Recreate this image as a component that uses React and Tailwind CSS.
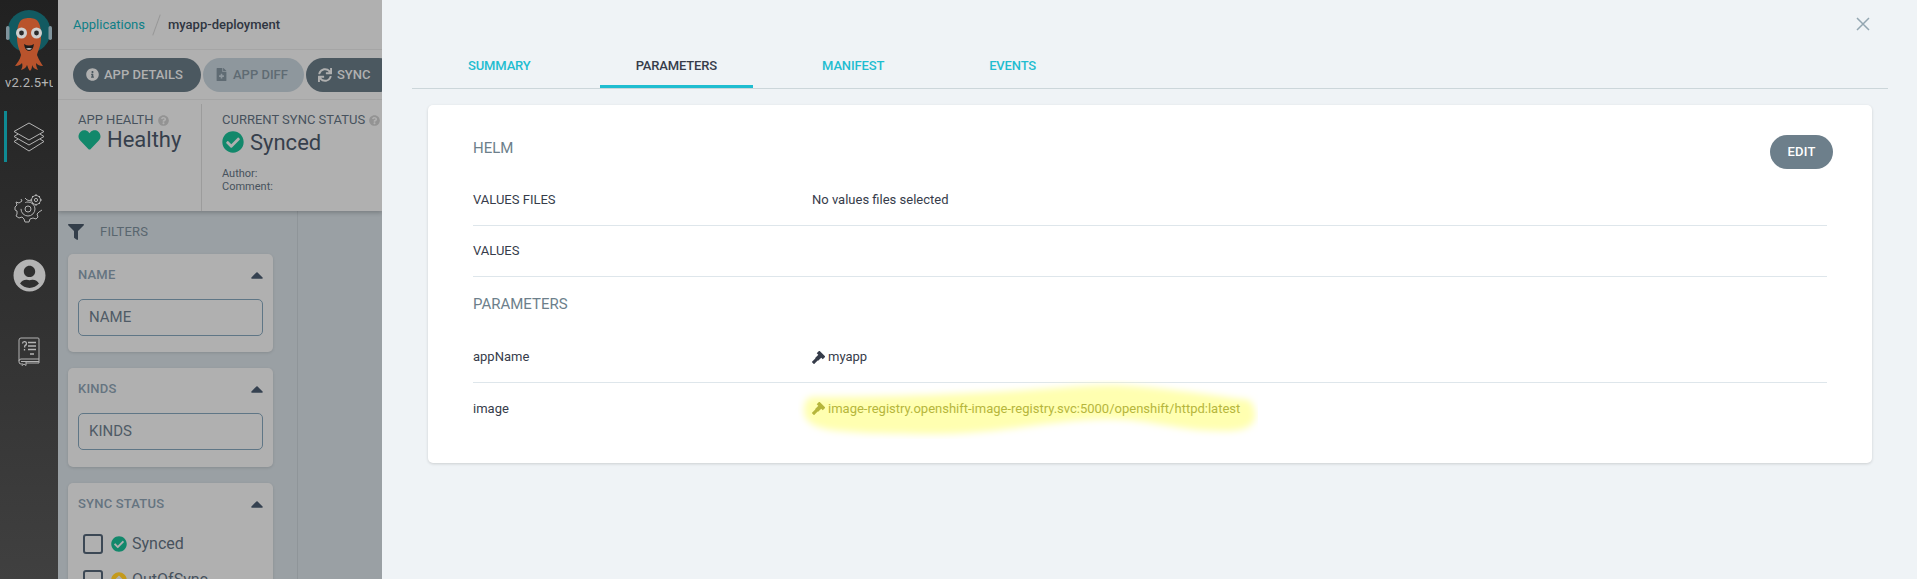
import { FaInfoCircle, FaFileMedical, FaSync, FaHeart, FaCheckCircle, FaQuestionCircle, FaFilter, FaCaretUp, FaUserCircle, FaArrowAltCircleUp } from 'react-icons/fa';

const StackIcon = () => (
    <svg viewBox="0 0 32 30" className="h-[30px] w-[32px]" fill="none" stroke="#b4b4b4" strokeWidth="1" strokeLinejoin="round">
        <path d="M16 1 L31 9.5 L16 18 L1 9.5 Z" />
        <path d="M5 12 L1 14.5 L16 23 L31 14.5 L27 12" />
        <path d="M5 17 L1 19.5 L16 29 L31 19.5 L27 17" />
    </svg>
);

const GearsIcon = () => (
    <svg viewBox="0 0 30 30" className="h-[30px] w-[30px]" fill="none" stroke="#b4b4b4" strokeWidth="1" strokeLinejoin="round">
        <path d="M11 5 L13 7 L17 8 M7 6 L8 8 L5 10 L2 9 L3 12 L1 14 L1 17 L3 18 L3 21 L2 23 L5 25 L8 24 L10 26 L11 29 L15 29 L16 26 L19 25 L22 26 L24 24 L23 21 L25 19 L28 17" />
        <circle cx="14" cy="16" r="7" strokeDasharray="22 8" />
        <circle cx="14" cy="16" r="3" />
        <circle cx="22" cy="7" r="4.5" />
        <circle cx="22" cy="7" r="1.6" />
        <path d="M22 1 V2.5 M22 11.5 V13 M16 7 H17.5 M26.5 7 H28 M18 3 L19 4 M25 10 L26 11 M26 3 L25 4 M19 10 L18 11" />
    </svg>
);

const DocsIcon = () => (
    <svg viewBox="0 0 22 29" className="h-[29px] w-[22px]" fill="none" stroke="#b4b4b4" strokeWidth="1" strokeLinejoin="round">
        <path d="M3 1 H20 A1 1 0 0 1 21 2 V26 H8 M3 1 A2 2 0 0 0 1 3 V25 A2 2 0 0 0 3 27 H3" />
        <path d="M1 24 A2 2 0 0 1 3 22 H21 M3 24.5 H21" />
        <path d="M4 26 V28.5 L6 27 L8 28.5 V24" />
        <path d="M10 5.5 H18 M10 9 H18 M10 12.5 H18 M12 17 H16" strokeWidth="1.5" />
        <path d="M4.5 6.5 A2 2 0 1 1 7 8.5 L6.5 10.5 M6.5 12 V13.5" strokeWidth="1.3" />
    </svg>
);

const ArgoLogo = () => (
    <svg viewBox="0 0 46 62" className="h-[62px] w-[46px]">
        <circle cx="23" cy="22.5" r="21.5" fill="#125a61" />
        <rect x="0" y="17" width="3.5" height="14" rx="1.7" fill="#7f939c" />
        <rect x="42.5" y="17" width="3.5" height="14" rx="1.7" fill="#7f939c" />
        <path d="M11 28 C11 12 15 9 23 9 C31 9 35 12 35 28 C35 38 32 41 31 46 C33 51 35 54 37 57 C33 57 31 55 30 54 C30 57 31 59 32 61 C28 60 27 58 26 56 C26 58 26 60 24 62 C22 60 22 58 21 56 C20 59 18 60 15 61 C16 59 17 57 16 54 C15 55 13 57 9 57 C11 54 14 51 15 46 C14 41 11 38 11 28 Z" fill="#b9532c" />
        <circle cx="15.5" cy="24" r="5.5" fill="#cfcfcf" />
        <circle cx="30.5" cy="24" r="5.5" fill="#cfcfcf" />
        <circle cx="15.5" cy="24" r="2.4" fill="#2a2a2a" />
        <circle cx="30.5" cy="24" r="2.4" fill="#2a2a2a" />
        <path d="M18 35 Q23 38 28 35 Q27 42 23 42 Q19 42 18 35 Z" fill="#1d1d1d" />
        <path d="M20 39.5 Q23 38.5 26 39.5 Q23 42 20 39.5 Z" fill="#cfcfcf" />
    </svg>
);

const PinIcon = () => (
    <svg viewBox="0 0 14 14" className="relative mr-[3px] h-[13px] w-[13px]" fill="none" stroke="currentColor">
        <path d="M6.5 1 L13 7.5" strokeWidth="4" />
        <path d="M9.5 4.5 L5 9" strokeWidth="4.5" />
        <path d="M6 8 L1 13" strokeWidth="3.4" />
    </svg>
);

const FilterCard = ({ title, children, className }) => (
    <div className={`mx-[10px] w-[205px] shrink-0 rounded-[5px] bg-[#b0b0b0] px-[10px] pt-[11px] shadow-[0_1px_3px_rgba(0,0,0,0.12)] ${className}`}>
        <div className="flex h-[20px] items-center justify-between">
            <span className="text-[13px] font-medium tracking-[0.2px] text-[#657480]">{title}</span>
            <FaCaretUp className="-mr-[4px] h-[20px] w-[20px] text-[#354150]" />
        </div>
        {children}
    </div>
);

const FilterInput = ({ label }) => (
    <div className="mt-[14px] flex h-[37px] items-center rounded-[5px] border border-[#5f7686] pl-[10px] text-[15px] text-[#4f5b66]">
        {label}
    </div>
);

const SyncOption = ({ icon, label }) => (
    <div className="flex h-[36px] items-center pl-[5px] text-[16px] text-[#47525d]">
        <span className="h-[20px] w-[20px] rounded-[3px] border-2 border-[#3c4855]" />
        {icon}
        <span className="ml-[5px]">{label}</span>
    </div>
);

const ParamRow = ({ name, value, border, pin, highlight }) => (
    <div className={`flex h-[51px] items-center text-[13px] text-[#363c4a] ${border ? 'border-b border-[#dee6eb]' : ''}`}>
        <div className="w-[339px] shrink-0">{name}</div>
        <div className={`relative flex items-center ${highlight ? 'text-[#b6b63c]' : ''}`}>
            {highlight && (
                <svg viewBox="0 0 460 60" className="absolute left-[-14px] top-[-20px] h-[60px] w-[460px]">
                    <defs>
                        <filter id="marker"><feGaussianBlur stdDeviation="3.5" /></filter>
                    </defs>
                    <path d="M6 32 C6 22 10 18 14 18 C70 18 140 16 196 13 C240 11 280 6 311 6 C350 6 410 16 451 21 C458 28 458 38 456 42 C452 50 440 52 426 52 C380 52 350 40 311 40 C260 40 200 55 139 55 C90 55 40 54 24 49 C12 46 6 40 6 32 Z" fill="#ffffb0" filter="url(#marker)" />
                </svg>
            )}
            {pin && <PinIcon />}
            <span className="relative">{value}</span>
        </div>
    </div>
);

const Tab = ({ label, active }) => (
    <div className={`h-[32px] px-[36px] pt-[1px] text-[13px] leading-[18px] font-medium tracking-[-0.15px] ${active ? 'border-b-[3px] border-[#1fbdd0] text-[#363c4a]' : 'text-[#1fbdd0]'}`}>
        {label}
    </div>
);

export default function App() {
    return (
        <div className="flex h-[579px] w-[1917px] overflow-hidden bg-[#eff3f6] font-['Roboto',sans-serif]">
            <aside className="flex w-[58px] shrink-0 flex-col items-center bg-gradient-to-b from-[#212121] to-[#404040] shadow-[2px_0_3px_rgba(0,0,0,0.25)]">
                <div className="mt-[9px] h-[62px]"><ArgoLogo /></div>
                <div className="mt-[4px] w-[48px] overflow-hidden whitespace-nowrap text-[13px] leading-[15px] tracking-[0.2px] text-[#b4b4b4]">v2.2.5+unknown</div>
                <div className="relative mt-[21px] flex h-[51px] w-full items-center justify-center">
                    <span className="absolute left-[4px] top-0 h-[51px] w-[3px] bg-[#0f8a93]" />
                    <span className="-ml-[1px]"><StackIcon /></span>
                </div>
                <div className="mt-[31px] h-[30px]"><GearsIcon /></div>
                <div className="mt-[36px] h-[33px]"><FaUserCircle className="h-[33px] w-[33px] text-[#b4b4b4]" /></div>
                <div className="mt-[45px] h-[29px]"><DocsIcon /></div>
            </aside>

            <div className="flex w-[324px] shrink-0 flex-col overflow-hidden bg-[#9aa0a4]">
                <div className="relative z-10 h-[211px] shrink-0 bg-[#b0b0b0] shadow-[0_2px_4px_rgba(0,0,0,0.2)]">
                    <div className="flex h-[50px] items-center border-b border-[#a5a5a5] pl-[15px] text-[13px]">
                        <span className="text-[#0e7f87]">Applications</span>
                        <span className="mx-[11px] h-[22px] w-px rotate-[20deg] bg-[#979797]" />
                        <span className="font-medium text-[#2f3541]">myapp-deployment</span>
                    </div>
                    <div className="flex h-[50px] items-center gap-[2px] border-b border-[#a5a5a5] pl-[15px] text-[13px] font-medium whitespace-nowrap text-[#b0b0b0]">
                        <div className="flex h-[34px] w-[128px] shrink-0 items-center rounded-full bg-[#4b5860] pl-[13px]">
                            <FaInfoCircle className="mr-[5px] h-[13px] w-[13px]" />APP DETAILS
                        </div>
                        <div className="flex h-[34px] w-[101px] shrink-0 items-center rounded-full bg-[#8e979d] pl-[13px] text-[#5f6b73]">
                            <FaFileMedical className="mr-[6px] h-[13px] w-[11px]" />APP DIFF
                        </div>
                        <div className="flex h-[34px] w-[90px] shrink-0 items-center rounded-full bg-[#4b5860] pl-[12px]">
                            <FaSync className="mr-[5px] h-[14px] w-[14px]" />SYNC
                        </div>
                    </div>
                    <div className="flex h-[111px] pt-[4px]">
                        <div className="w-[144px] shrink-0 border-r border-[#9c9c9c] pb-[3px] pl-[20px]">
                            <div className="mt-[7px] flex items-center text-[13px] leading-[18px] text-[#47525d]">APP HEALTH<FaQuestionCircle className="ml-[4px] h-[11px] w-[11px] text-[#939393]" /></div>
                            <div className="-mt-[3px] flex items-center text-[22px] leading-[28px] text-[#363f4c]">
                                <FaHeart className="mr-[6px] h-[22px] w-[23px] text-[#12886b]" />Healthy
                            </div>
                        </div>
                        <div className="pl-[20px] whitespace-nowrap">
                            <div className="mt-[7px] flex items-center text-[13px] leading-[18px] text-[#47525d]">CURRENT SYNC STATUS<FaQuestionCircle className="ml-[4px] h-[11px] w-[11px] text-[#939393]" /></div>
                            <div className="-mt-[2px] flex h-[30px] items-center text-[22px] text-[#363f4c]">
                                <FaCheckCircle className="mr-[6px] h-[22px] w-[22px] text-[#12886b]" />Synced
                            </div>
                            <div className="mt-[11px] text-[11px] leading-[12px] text-[#47525d]">Author:</div>
                            <div className="text-[11px] leading-[13px] text-[#47525d]">Comment:</div>
                        </div>
                    </div>
                </div>
                <div className="flex min-h-0 flex-1">
                    <div className="flex w-[240px] shrink-0 flex-col border-r border-[#8f9599]">
                        <div className="mb-[2px] flex h-[41px] shrink-0 items-center pl-[10px] text-[13px] tracking-[0.2px] text-[#59666f]">
                            <FaFilter className="mr-[16px] h-[16px] w-[16px] text-[#333e4a]" />FILTERS
                        </div>
                        <FilterCard title="NAME" className="h-[98px]"><FilterInput label="NAME" /></FilterCard>
                        <FilterCard title="KINDS" className="mt-[16px] h-[99px]"><FilterInput label="KINDS" /></FilterCard>
                        <FilterCard title="SYNC STATUS" className="mt-[16px] h-[120px]">
                            <div className="mt-[12px]">
                                <SyncOption label="Synced" icon={<FaCheckCircle className="ml-[8px] h-[16px] w-[16px] text-[#12886b]" />} />
                                <SyncOption label="OutOfSync" icon={<FaArrowAltCircleUp className="ml-[8px] h-[16px] w-[16px] text-[#c49a1c]" />} />
                            </div>
                        </FilterCard>
                    </div>
                </div>
            </div>

            <main className="flex min-w-0 flex-1 flex-col pl-[30px] pr-[29px]">
                <div className="flex h-[49px] shrink-0 items-center justify-end pr-[18px] pb-[2px]">
                    <svg viewBox="0 0 14 14" className="h-[14px] w-[14px]" fill="none" stroke="#93a6b1" strokeWidth="1.5">
                        <path d="M1 1 L13 13 M13 1 L1 13" />
                    </svg>
                </div>
                <div className="flex h-[40px] shrink-0 items-end border-b border-[#ccd6da] pl-[20px]">
                    <div className="flex h-[32px] gap-[33px]">
                        <Tab label="SUMMARY" />
                        <Tab label="PARAMETERS" active />
                        <Tab label="MANIFEST" />
                        <Tab label="EVENTS" />
                    </div>
                </div>
                <div className="mx-[16px] mt-[16px] h-[358px] shrink-0 rounded-[5px] bg-white px-[45px] shadow-[0_1px_3px_rgba(0,0,0,0.15)]">
                    <div className="relative h-[70px] pt-[33px] text-[15px] leading-[20px] text-[#6d7f8b]">
                        HELM
                        <div className="absolute right-[-6px] top-[30px] flex h-[34px] w-[63px] items-center justify-center rounded-full bg-[#6d7f8b] text-[13px] tracking-[0.2px] font-medium text-white">EDIT</div>
                    </div>
                    <ParamRow name="VALUES FILES" value="No values files selected" border />
                    <ParamRow name="VALUES" border />
                    <div className="h-[55px] pt-[17px] text-[15px] leading-[20px] text-[#6d7f8b]">PARAMETERS</div>
                    <ParamRow name="appName" value="myapp" pin border />
                    <ParamRow name="image" value="image-registry.openshift-image-registry.svc:5000/openshift/httpd:latest" pin highlight />
                </div>
            </main>
        </div>
    );
}
